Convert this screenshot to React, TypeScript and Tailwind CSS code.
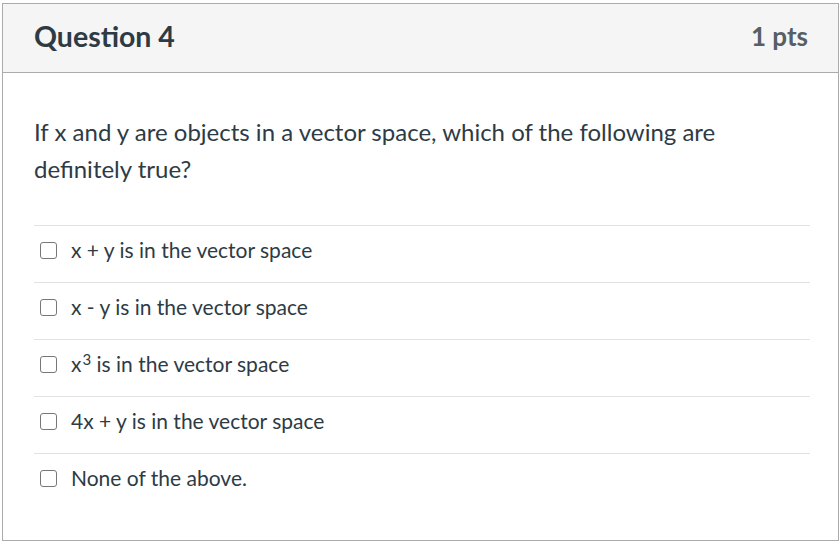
import React from "react";

const answers: React.ReactNode[] = [
  <>x + y is in the vector space</>,
  <>x - y is in the vector space</>,
  <>
    x<sup className="text-[15px] ml-[1px]">3</sup> is in the vector space
  </>,
  <>4x + y is in the vector space</>,
  <>None of the above.</>,
];

export default function App() {
  return (
    <div className="w-[840px] h-[545px] bg-white pt-[3px] pl-[2px]" style={{ fontFamily: "Lato, 'Noto Sans', sans-serif" }}>
      <div className="w-[837px] h-[538px] border border-[#ababab] flex flex-col">
        <div className="h-[69px] bg-[#f5f5f5] border-b border-[#ababab] flex items-center justify-between pl-[31px] pr-[30px] pb-[4px] shrink-0">
          <div className="text-[28.5px] font-bold text-[#2d3b45]">Question 4</div>
          <div className="text-[26px] font-bold text-[#555f66]">1 pts</div>
        </div>
        <div className="px-[31px] pt-[40px]">
          <div className="text-[24px] leading-[37px] text-[#2d3b45] pb-[38px]">
            If x and y are objects in a vector space, which of the following are definitely true?
          </div>
          <div className="mr-[-3px]">
            {answers.map((a, i) => (
              <div key={i} className="h-[57px] border-t border-[#e2e2e2] flex items-center pl-[6px] pb-[8px]">
                <div className="w-[17px] h-[17px] border-[1.5px] border-[#777777] rounded-[3px] mr-[14px] shrink-0 bg-white" />
                <div className="text-[21px] text-[#2d3b45]">{a}</div>
              </div>
            ))}
          </div>
        </div>
      </div>
    </div>
  );
}
